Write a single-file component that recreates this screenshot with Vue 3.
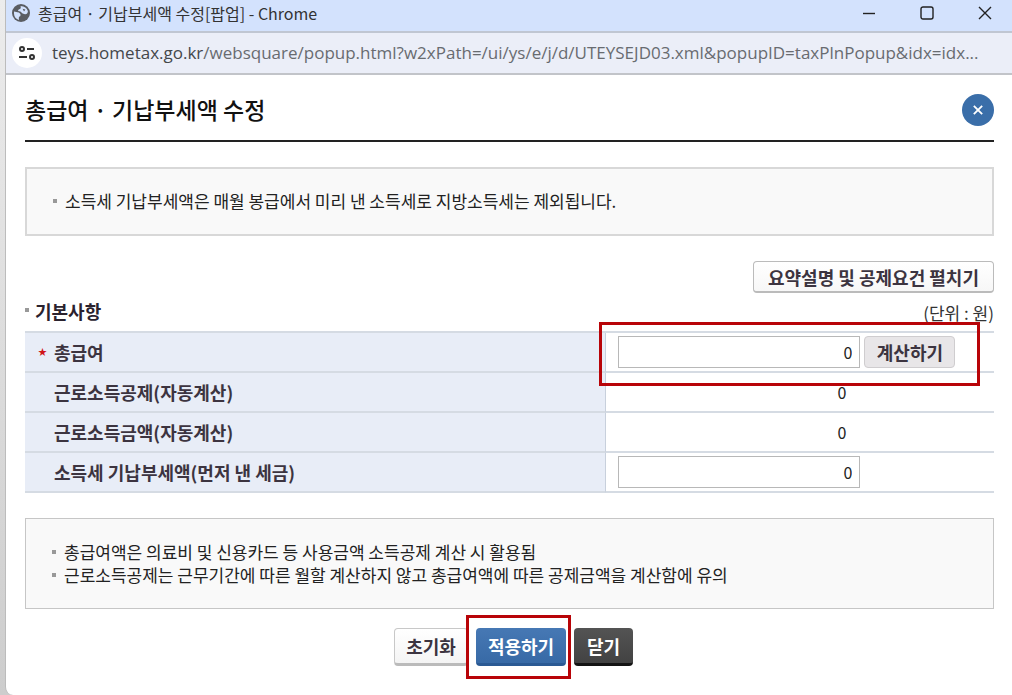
<script setup>
import { ref } from 'vue'

const salary = ref('0')
const prepaidTax = ref('0')
const notes = [
  '총급여액은 의료비 및 신용카드 등 사용금액 소득공제 계산 시 활용됨',
  '근로소득공제는 근무기간에 따른 월할 계산하지 않고 총급여액에 따른 공제금액을 계산함에 유의',
]

function reset() {
  salary.value = '0'
  prepaidTax.value = '0'
}
</script>

<template>
  <div class="desktop">
    <div class="window">
      <div class="titlebar">
        <svg class="globe" viewBox="0 0 18 18" aria-hidden="true">
          <circle cx="9" cy="9" r="9" fill="#5a5d62" />
          <path d="M2 7.5 L5.5 8.2 Q8.5 8.6 8.6 11 L8.2 12.2 Q6.6 12.4 6.8 14 L7 16 Q2.3 14.6 2 9.8 Z" fill="#d3e2fd" />
          <path d="M8.6 2 Q14.4 2.4 15.9 7.2 Q15.6 10.4 13 10.2 L10.6 9.6 L8.4 7.4 L6.2 7.1 Q5.6 5.6 7.2 5.2 Q8.8 5.2 8.8 3.6 Z" fill="#d3e2fd" />
          <path d="M10.6 4.8 L13.4 5.4 L12 7.4 Z" fill="#5a5d62" />
        </svg>
        <span class="window-title">총급여 · 기납부세액 수정[팝업] - Chrome</span>
        <div class="window-controls">
          <button type="button" aria-label="최소화">
            <svg viewBox="0 0 14 14"><path d="M1 7.5H13" /></svg>
          </button>
          <button type="button" aria-label="최대화">
            <svg viewBox="0 0 14 14"><rect x="1" y="1" width="12" height="12" rx="2" /></svg>
          </button>
          <button type="button" aria-label="창 닫기">
            <svg viewBox="0 0 14 14"><path d="M1 1L13 13M13 1L1 13" /></svg>
          </button>
        </div>
      </div>

      <div class="addressbar">
        <button type="button" class="site-info" aria-label="사이트 정보">
          <svg viewBox="0 0 16 14">
            <circle cx="3" cy="3" r="2" />
            <path d="M8 3H15M0 11H8" />
            <circle cx="13" cy="11" r="2" />
          </svg>
        </button>
        <div class="url"><span class="host">teys.hometax.go.kr</span>/websquare/popup.html?w2xPath=/ui/ys/e/j/d/UTEYSEJD03.xml&amp;popupID=taxPlnPopup&amp;idx=idx...</div>
      </div>

      <main class="page">
        <header class="page-head">
          <h1>총급여 · 기납부세액 수정</h1>
          <button type="button" class="round-close" aria-label="팝업 닫기">
            <svg viewBox="0 0 12 12"><path d="M1 1L11 11M11 1L1 11" /></svg>
          </button>
        </header>

        <ul class="notice notice-top">
          <li>소득세 기납부세액은 매월 봉급에서 미리 낸 소득세로 지방소득세는 제외됩니다.</li>
        </ul>

        <div class="toggle-row">
          <button type="button" class="btn btn-outline">요약설명 및 공제요건 펼치기</button>
        </div>

        <div class="section-head">
          <h2>기본사항</h2>
          <span class="unit">(단위 : 원)</span>
        </div>

        <table>
          <tbody>
            <tr>
              <th scope="row" class="required"><label for="salary">총급여</label></th>
              <td>
                <div class="field marked">
                  <input id="salary" v-model="salary" type="text" />
                  <button type="button" class="btn btn-calc">계산하기</button>
                </div>
              </td>
            </tr>
            <tr>
              <th scope="row">근로소득공제(자동계산)</th>
              <td><div class="amount">0</div></td>
            </tr>
            <tr>
              <th scope="row">근로소득금액(자동계산)</th>
              <td><div class="amount">0</div></td>
            </tr>
            <tr>
              <th scope="row"><label for="prepaid">소득세 기납부세액(먼저 낸 세금)</label></th>
              <td>
                <div class="field"><input id="prepaid" v-model="prepaidTax" type="text" /></div>
              </td>
            </tr>
          </tbody>
        </table>

        <ul class="notice notice-bottom">
          <li v-for="note in notes" :key="note">{{ note }}</li>
        </ul>

        <div class="actions">
          <button type="button" class="btn btn-reset" @click="reset">초기화</button>
          <div class="apply-wrap">
            <button type="button" class="btn btn-apply">적용하기</button>
          </div>
          <button type="button" class="btn btn-dark">닫기</button>
        </div>
      </main>
    </div>
  </div>
</template>

<style>
body {
  margin: 0;
}
</style>

<style scoped>
* {
  box-sizing: border-box;
}

.desktop {
  min-height: 100vh;
  padding-left: 5px;
  display: flex;
  background: linear-gradient(#ececec, #cdcdcd);
  font-family: "Noto Sans CJK KR", "Liberation Sans", sans-serif;
  font-size: 17px;
  color: #222;
}

button,
input {
  font-family: inherit;
}

.window {
  flex: 1;
  min-width: 0;
  border-left: 1px solid #bcbcbc;
  border-bottom-left-radius: 8px;
  background: #fff;
}

.titlebar {
  display: flex;
  align-items: center;
  height: 33px;
  padding: 0 20px 6px 6px;
  border-bottom: 2px solid #c0c6d2;
  background: #d3e2fd;
}

.globe {
  width: 18px;
  height: 18px;
}

.window-title {
  flex: 1;
  margin-left: 8px;
  font-size: 16px;
  line-height: 24px;
  color: #333;
}

.window-controls {
  display: flex;
  gap: 44px;
}

.window-controls button {
  width: 14px;
  height: 14px;
  padding: 0;
  border: 0;
  background: none;
}

.window-controls svg {
  display: block;
  fill: none;
  stroke: #222;
  stroke-width: 1.4;
}

.addressbar {
  display: flex;
  align-items: center;
  height: 42px;
  padding: 0 20px 0 6px;
  border-bottom: 2px solid #c2c4c9;
  background: #ebeef8;
}

.site-info {
  flex: none;
  display: grid;
  place-items: center;
  width: 30px;
  height: 30px;
  padding: 0;
  border: 0;
  border-radius: 50%;
  background: #fff;
}

.site-info svg {
  width: 16px;
  height: 14px;
  fill: none;
  stroke: #333;
  stroke-width: 2;
}

.url {
  margin-left: 10px;
  overflow: hidden;
  white-space: nowrap;
  font-family: "Open Sans", "Noto Sans", sans-serif;
  font-size: 17px;
  line-height: 26px;
  color: #686b70;
}

.host {
  color: #44474b;
}

.page {
  padding: 0 18px 16px 19px;
}

.page-head {
  display: flex;
  align-items: center;
  justify-content: space-between;
  height: 67px;
  margin-bottom: 25px;
  border-bottom: 2px solid #222;
}

h1 {
  margin: 0;
  padding-top: 2px;
  font-size: 23px;
  font-weight: 500;
  line-height: 32px;
  color: #111;
}

.round-close {
  display: grid;
  place-items: center;
  width: 32px;
  height: 32px;
  margin-top: 6px;
  margin-bottom: 2px;
  padding: 0;
  border: 0;
  border-radius: 50%;
  background: #3a6ea9;
}

.round-close svg {
  width: 10px;
  height: 10px;
  stroke: #fff;
  stroke-width: 2.2;
}

.notice {
  margin: 0;
  padding: 20px 38px 22px;
  list-style: none;
  border: 2px solid #d8d8d8;
  background: #f9f9f9;
  font-size: 17px;
  line-height: 23px;
  color: #222;
}

.notice li {
  position: relative;
}

.notice li::before,
h2::before {
  content: "";
  position: absolute;
  left: -12px;
  top: 10px;
  width: 4px;
  height: 4px;
  background: #999;
}

.notice-bottom {
  margin-top: 25px;
  padding: 21px 38px 22px;
  border: 1px solid #c6c6c6;
}

.toggle-row {
  display: flex;
  justify-content: flex-end;
  margin-top: 25px;
}

.btn {
  padding: 0;
  border-radius: 4px;
  font-size: 18px;
  font-weight: 700;
  line-height: 24px;
  white-space: nowrap;
  color: #3c3440;
}

.btn-outline {
  width: 241px;
  height: 32px;
  border: 1px solid #bbb;
  border-bottom-width: 2px;
  background: linear-gradient(#fff, #f7f7f7);
}

.section-head {
  display: flex;
  align-items: flex-end;
  justify-content: space-between;
  height: 38px;
  padding-bottom: 7px;
}

h2 {
  position: relative;
  margin: 0;
  padding-left: 10px;
  font-size: 18px;
  font-weight: 700;
  line-height: 26px;
  color: #2a222e;
}

h2::before {
  left: 0;
}

.unit {
  font-size: 17px;
  line-height: 22px;
  color: #333;
}

table {
  width: 100%;
  table-layout: fixed;
  border-collapse: separate;
  border-spacing: 0;
  border-top: 2px solid #d5dbe3;
}

th,
td {
  height: 40px;
  padding: 0;
  border-bottom: 2px solid #d5dbe3;
}

th {
  position: relative;
  width: 60%;
  padding-left: 29px;
  border-right: 1px solid #c8d0dc;
  background: #e8edf7;
  font-size: 18px;
  font-weight: 700;
  line-height: 24px;
  text-align: left;
  color: #3c3440;
}

.required::before {
  content: "★";
  position: absolute;
  left: 13px;
  top: 7px;
  font-size: 9px;
  color: #d01418;
}

td {
  padding-left: 12px;
}

.field {
  position: relative;
  display: flex;
  align-items: center;
  gap: 4px;
}

.field input {
  width: 242px;
  height: 32px;
  padding: 0 7px;
  border: 1px solid #b8b8b8;
  border-radius: 0;
  background: #fff;
  font-size: 16px;
  text-align: right;
  color: #222;
}

.marked::after,
.apply-wrap::after {
  content: "";
  position: absolute;
  z-index: 1;
  border: 3px solid #b80408;
  pointer-events: none;
}

.marked {
  z-index: 1;
}

.marked::after {
  inset: -14px 14px -18px -19px;
}

.btn-calc {
  width: 91px;
  height: 32px;
  border: 1px solid #cfcdcf;
  background: #e8e6e8;
}

.amount {
  width: 228px;
  font-size: 16px;
  line-height: 24px;
  text-align: right;
}

.actions {
  display: flex;
  justify-content: center;
  gap: 8px;
  margin-top: 19px;
  padding-left: 8px;
}

.actions .btn {
  height: 38px;
  border: 0;
  border-bottom: 3px solid;
}

.actions .btn-reset {
  width: 74px;
  border: 1px solid #c8c8c8;
  border-bottom: 3px solid #bbb;
  background: linear-gradient(#fff, #f4f4f4);
}

.apply-wrap {
  position: relative;
}

.apply-wrap::after {
  inset: -13px -5px -13px -10px;
}

.actions .btn-apply {
  width: 90px;
  border-bottom-color: #2b5a94;
  background: linear-gradient(#4678b4, #386aa6);
  color: #fff;
}

.actions .btn-dark {
  width: 59px;
  border-bottom-color: #141414;
  background: linear-gradient(#545454, #424242);
  color: #fff;
}
</style>
